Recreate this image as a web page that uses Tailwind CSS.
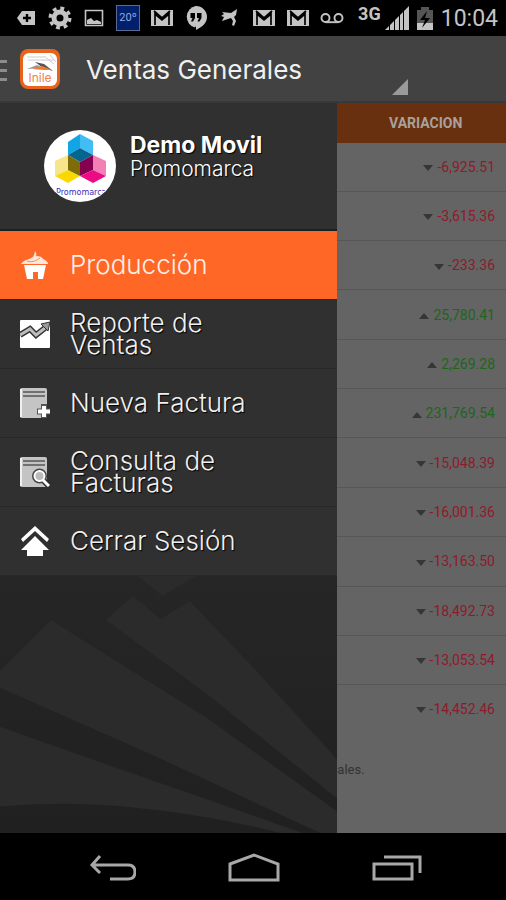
<!DOCTYPE html>
<html lang="es">
<head>
    <meta charset="UTF-8">
    <meta name="viewport" content="width=device-width, initial-scale=1.0">
    <title>Ventas Generales</title>
    <script src="https://cdn.jsdelivr.net/npm/@tailwindcss/browser@4"></script>
</head>
<body class="bg-black font-['Inter',sans-serif] flex flex-col min-h-screen overflow-x-hidden">
    <!-- Shared symbols -->
    <svg class="hidden">
        <symbol id="down" viewBox="0 0 10 6"><path d="M0 0h10L5 6z" fill="#363636"/></symbol>
        <symbol id="up" viewBox="0 0 10 6"><path d="M0 6h10L5 0z" fill="#363636"/></symbol>
        <symbol id="mail" viewBox="0 0 24 24"><path d="M1 4h22v16H1z" fill="#c4c4c4"/><path d="M5 19V8l7 6 7-6v11M4 5l8 7 8-7" fill="none" stroke="#000" stroke-width="1.700"/></symbol>
    </svg>

    <!-- Status bar -->
    <div class="h-9 bg-black flex items-center text-[#c4c4c4] pl-[14px] pr-2 font-['Roboto',sans-serif]">
        <div class="flex items-center gap-[10px]">
            <svg class="w-6 h-6" viewBox="0 0 24 24"><path d="M8 5h13v14H8l-5-7z" fill="currentColor"/><path d="M13 8v8M9 12h8" stroke="#000" stroke-width="2.400"/></svg>
            <svg class="w-6 h-6" viewBox="0 0 24 24" fill="none" stroke="currentColor"><circle cx="12" cy="12" r="6" stroke-width="5"/><circle cx="12" cy="12" r="9.800" stroke-width="3.400" stroke-dasharray="3.850 3.850"/></svg>
            <svg class="w-6 h-6" viewBox="0 0 24 24"><path d="M3.500 4.500h17v15h-17z" fill="none" stroke="currentColor" stroke-width="1.600"/><path d="M5 18v-4l4-2 3 3 3-1 4 2v2z" fill="currentColor"/></svg>
            <span class="w-6 h-[26px] bg-[#00206e] border border-[#5c6a90] text-[11px] text-[#8fa8e0] flex items-center justify-center">20º</span>
            <svg class="w-6 h-6"><use href="#mail"/></svg>
            <svg class="w-6 h-6" viewBox="0 0 24 24"><path d="M12 0a11 11 0 0 1 11 11c0 6-5 10-11 13v-3A11 11 0 0 1 12 0z" fill="currentColor"/><path d="M12 0a11 11 0 0 0-1 21.500z" fill="currentColor"/><path d="M6.500 7h4.500v5l-2 3.500H7L8.500 12h-2zM13 7h4.500v5l-2 3.500h-2L15 12h-2z" fill="#000"/></svg>
            <svg class="w-6 h-6" viewBox="0 0 24 24"><path d="M4 6l9 1 6-4-1 6-2 2 2 4-2 5-2-1 1-4-2-3-9 3 2-4-3-1 3-2z" fill="currentColor"/></svg>
            <svg class="w-6 h-6"><use href="#mail"/></svg>
            <svg class="w-6 h-6"><use href="#mail"/></svg>
            <svg class="w-6 h-6" viewBox="0 0 24 24" fill="none" stroke="currentColor" stroke-width="1.900"><circle cx="5.500" cy="12" r="4"/><circle cx="18.500" cy="12" r="4"/><path d="M5.500 16.200h13"/></svg>
        </div>
        <div class="ml-auto flex items-center">
            <span class="text-[18px] font-bold leading-none pb-2">3G</span>
            <svg class="w-6 h-6 ml-1" viewBox="0 0 24 24" fill="currentColor"><path d="M0 24l4-4v4zM5 24v-5l4-4v9zM10 24V14l4-4v14zM15 24V9l3-3v18zM19 24V5l5-5v24z"/></svg>
            <svg class="w-4 h-6 ml-2 mr-2" viewBox="0 0 16 24"><path d="M4 1h8v3h4v20H0V4h4z" fill="#555"/><path d="M0 17h16v7H0z" fill="#c4c4c4"/><path d="M10 5L3 14h5l-3 8 8-10H8z" fill="#000"/></svg>
            <span class="text-[23px] leading-none">10:04</span>
        </div>
    </div>

    <!-- Action bar -->
    <header class="h-[67px] bg-[#424242] border-b-2 border-[#393939] flex items-center">
        <button aria-label="Menú" class="w-5 text-[#8c8c8c]">
            <svg class="w-2 h-6" viewBox="0 0 8 24"><path d="M0 4.500h7M0 13.500h7M0 22.500h7" stroke="currentColor" stroke-width="3"/></svg>
        </button>
        <svg class="w-10 h-10" viewBox="0 0 40 40">
            <rect width="40" height="40" rx="8" fill="#e8631c"/>
            <rect x="3" y="4" width="34" height="33" rx="6" fill="#fff"/>
            <path d="M7 8h17M8 11h26M24 7l10 8M30 6l6 7" stroke="#ccc" fill="none"/>
            <path d="M7 20l10-4 6 3z" fill="#999"/>
            <path d="M15 13l9 2 9 7-10-3z" fill="#555"/><path d="M12 20l10-3 10 4-8 0z" fill="#f07b35"/>
            <text x="20" y="33" text-anchor="middle" font-family="Inter" font-size="12" fill="#f2814a">Inile</text>
        </svg>
        <h1 class="ml-[26px] pt-[2px] text-[26px] text-[#f0f0f0]">Ventas Generales</h1>
        <button aria-label="Cambiar vista" class="ml-auto mr-[98px] self-end pb-[6px]">
            <svg class="w-4 h-4" viewBox="0 0 16 16"><path d="M16 0v16H0z" fill="#9a9a9a"/></svg>
        </button>
    </header>

    <main class="flex flex-1 bg-[#646464]">
        <!-- Navigation drawer -->
        <aside class="w-2/3 shrink-0 bg-[#242424] flex flex-col">
            <div class="h-32 bg-[#303030] border-b-2 border-[#182026] flex pl-11 pt-[27px]">
                <svg class="w-[72px] h-[72px] shrink-0" viewBox="0 0 72 72">
                    <defs><clipPath id="avatar"><circle cx="36" cy="36" r="35"/></clipPath></defs>
                    <circle cx="36" cy="36" r="36" fill="#fff"/>
                    <path d="M24 12L36 4v14l-12 7z" fill="#12a5e6"/><path d="M36 4l13 7v14l-13-7z" fill="#41bdf5"/>
                    <path d="M24 25l12-7 13 7-13 7z" fill="#04668f"/>
                    <path d="M11 31l13-6v15l-13 6z" fill="#f7e58a"/><path d="M11 46l13-6 12 6-12 7z" fill="#fbd800"/>
                    <path d="M24 25l12 7v14l-12-6z" fill="#7e6c08"/><path d="M36 32l13-7v15l-13 6z" fill="#85004f"/>
                    <path d="M49 25l13 6v15l-13-6z" fill="#f27fb5"/><path d="M36 46l13-6 13 6-13 7z" fill="#ec0a87"/>
                    <text x="12" y="65" clip-path="url(#avatar)" font-family="DejaVu Sans" font-size="8" fill="#3430b8">Promomarca</text>
                </svg>
                <div class="ml-[14px] pt-[3px] text-white [text-shadow:1px_1px_1px_#000]">
                    <p class="text-[23px] leading-6 font-bold">Demo Movil</p>
                    <p class="text-[21px] leading-6 font-light">Promomarca</p>
                </div>
            </div>

            <nav class="bg-[#303030] text-[26px] leading-[22px] font-light text-[#f0f0f0] [text-shadow:1px_1px_1px_#000]">
                <a href="#" class="h-[69px] flex items-center gap-5 pl-5 bg-[#ff6726] text-[#fff0e8] [text-shadow:none] border-b border-[#282828]">
                    <svg class="w-[30px] h-[30px] shrink-0" viewBox="0 0 30 30" fill="#fff"><path d="M4 15h22l-3 14h-5v-7h-5v7H7z"/><path d="M1 14c2-3 5-4 8-5 4-1 5-3 6-8 1 2 2 3 1 5 4 0 6 1 7 3 3 1 5 3 5 5z" fill="#ffe6da"/><path d="M7 11c6 2 10-1 13-3" stroke="#ff8a55" fill="none"/></svg>
                    <span>Producción</span>
                </a>
                <a href="#" class="h-[69px] flex items-center gap-5 pl-5 border-b border-[#282828]">
                    <svg class="w-[30px] h-[30px] shrink-0" viewBox="0 0 30 30"><rect x="0" y="1" width="30" height="28" rx="1" fill="#fff"/><path d="M0 16l10-6 6 6 9-7" fill="none" stroke="#303030" stroke-width="6"/><path d="M0 16l10-6 6 6 9-7" fill="none" stroke="#bdbdbd" stroke-width="3"/><path d="M21 5l9-2-2 9z" fill="#999" stroke="#303030"/></svg>
                    <span>Reporte de<br>Ventas</span>
                </a>
                <a href="#" class="h-[69px] flex items-center gap-5 pl-5 border-b border-[#282828]">
                    <svg class="w-[30px] h-[30px] shrink-0" viewBox="0 0 30 30"><rect x="0" y="0" width="27" height="30" rx="2" fill="#c4c4c4"/><path d="M1 1v28" stroke="#f0f0f0" stroke-width="2"/><path d="M3 4h22M3 8h22" stroke="#555" stroke-width="1.500"/><path d="M24 16v14M17 23.500h13" stroke="#555" stroke-width="6"/><path d="M24 18v11M18 23.500h12" stroke="#fff" stroke-width="4"/></svg>
                    <span>Nueva Factura</span>
                </a>
                <a href="#" class="h-[69px] flex items-center gap-5 pl-5 border-b border-[#282828]">
                    <svg class="w-[30px] h-[30px] shrink-0" viewBox="0 0 30 30"><rect x="0" y="0" width="27" height="30" rx="2" fill="#c4c4c4"/><path d="M1 1v28" stroke="#f0f0f0" stroke-width="2"/><path d="M3 4h22M3 8h22" stroke="#555" stroke-width="1.500"/><path d="M23 23l6 6" stroke="#303030" stroke-width="6"/><circle cx="19.500" cy="19" r="7.500" fill="#444"/><circle cx="19.500" cy="19" r="5" fill="#bbb" stroke="#fff" stroke-width="2"/><path d="M23 23l6 6" stroke="#fff" stroke-width="3"/></svg>
                    <span>Consulta de<br>Facturas</span>
                </a>
                <a href="#" class="h-[69px] flex items-center gap-5 pl-5 border-b border-[#282828]">
                    <svg class="w-[30px] h-[30px] shrink-0" viewBox="0 0 30 30" fill="#fff"><path d="M15 0l14 13-2 3L15 5 3 16l-2-3z"/><path d="M15 10l14 14h-6v6H7v-6H1z"/></svg>
                    <span>Cerrar Sesión</span>
                </a>
            </nav>

            <!-- Decorative rays -->
            <svg class="w-full flex-1 bg-linear-to-b from-[#262626] to-[#202020]" viewBox="0 0 338 258" preserveAspectRatio="xMidYMin slice" fill="#2b2b2b">
                <path d="M138 0h58l-33 20z"/>
                <path d="M106 44l27-24 28 23 29-18 65 68 83 91v39L207 118z"/>
                <path d="M0 95l51-51 156 98 131 94v22h-16L150 178 0 112z"/>
                <path d="M0 151l133 47 172 60h-22q-75-19-150-26-66-7-133-1z"/>
            </svg>
        </aside>

        <!-- Sales table, dimmed behind the drawer -->
        <section class="flex-1 font-['Roboto',sans-serif] text-sm overflow-hidden">
            <table class="w-full h-[630px] border-collapse">
                <thead>
                    <tr class="h-10 bg-[#68300f] text-[#aaa19c]">
                        <th class="font-bold pl-2">VARIACION</th>
                    </tr>
                </thead>
                <tbody class="text-right text-[#8e1b2b] divide-y divide-[#575757]">
                    <tr><td class="pr-[11px]"><svg class="inline w-[10px] h-[6px] mr-1"><use href="#down"/></svg>-6,925.51</td></tr>
                    <tr><td class="pr-[11px]"><svg class="inline w-[10px] h-[6px] mr-1"><use href="#down"/></svg>-3,615.36</td></tr>
                    <tr><td class="pr-[11px]"><svg class="inline w-[10px] h-[6px] mr-1"><use href="#down"/></svg>-233.36</td></tr>
                    <tr><td class="pr-[11px] text-[#1d661b]"><svg class="inline w-[10px] h-[6px] mr-1"><use href="#up"/></svg>25,780.41</td></tr>
                    <tr><td class="pr-[11px] text-[#1d661b]"><svg class="inline w-[10px] h-[6px] mr-1"><use href="#up"/></svg>2,269.28</td></tr>
                    <tr><td class="pr-[11px] text-[#1d661b]"><svg class="inline w-[10px] h-[6px] mr-1"><use href="#up"/></svg>231,769.54</td></tr>
                    <tr><td class="pr-[11px]"><svg class="inline w-[10px] h-[6px] mr-1"><use href="#down"/></svg>-15,048.39</td></tr>
                    <tr><td class="pr-[11px]"><svg class="inline w-[10px] h-[6px] mr-1"><use href="#down"/></svg>-16,001.36</td></tr>
                    <tr><td class="pr-[11px]"><svg class="inline w-[10px] h-[6px] mr-1"><use href="#down"/></svg>-13,163.50</td></tr>
                    <tr><td class="pr-[11px]"><svg class="inline w-[10px] h-[6px] mr-1"><use href="#down"/></svg>-18,492.73</td></tr>
                    <tr><td class="pr-[11px]"><svg class="inline w-[10px] h-[6px] mr-1"><use href="#down"/></svg>-13,053.54</td></tr>
                    <tr><td class="pr-[11px]"><svg class="inline w-[10px] h-[6px] mr-1"><use href="#down"/></svg>-14,452.46</td></tr>
                </tbody>
            </table>
            <p class="pt-7 text-[13px] text-[#333]">ales.</p>
        </section>
    </main>

    <!-- System navigation -->
    <footer class="h-[67px] bg-black flex items-center justify-between pl-[86px] pr-[84px] text-[#a8a8a8]">
        <button aria-label="Atrás"><svg class="w-[50px] h-8" viewBox="0 0 50 32" fill="none" stroke="currentColor" stroke-width="3"><path d="M14 5L6 14l8 8M6 14h36q7 0 7 7t-7 7H24"/></svg></button>
        <button aria-label="Inicio"><svg class="w-[54px] h-8" viewBox="0 0 54 32" fill="none" stroke="currentColor" stroke-width="3"><path d="M3 13l24-9 24 9v16H3z"/></svg></button>
        <button aria-label="Recientes"><svg class="w-[50px] h-8" viewBox="0 0 50 32" fill="none" stroke="currentColor" stroke-width="3"><path d="M2 13h38v15H2zM12 6h36v16"/></svg></button>
    </footer>
</body>
</html>
